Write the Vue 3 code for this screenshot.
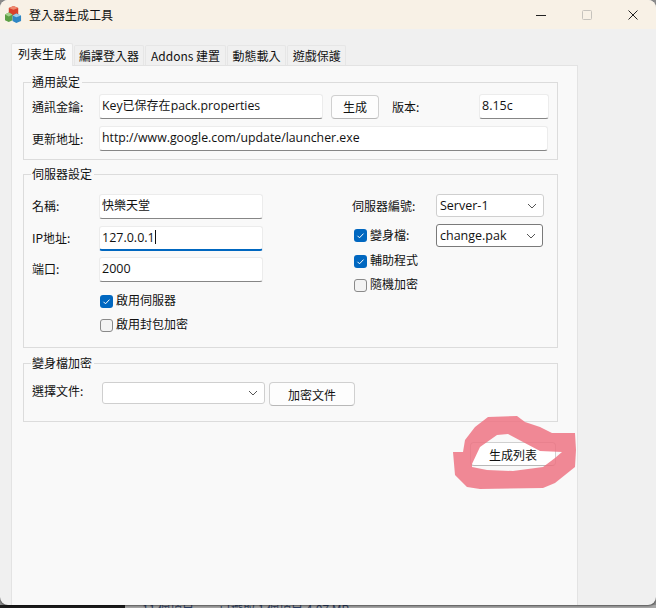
<script setup>
const tabs = ['編譯登入器', 'Addons 建置', '動態載入', '遊戲保護']
</script>

<template>
  <div class="screen">
    <div class="window">
      <div class="titlebar">
        <svg class="app-icon" width="17" height="17" viewBox="0 0 18 18">
          <polygon points="4,2 9,0 14,2 14,9 9,11 4,9" fill="#d8402c" />
          <polygon points="4,2 9,4 14,2 9,0" fill="#ee8a70" />
          <polygon points="0,9 4,7 8,9 8,15 4,17 0,15" fill="#5c9f44" />
          <polygon points="0,9 4,11 8,9 4,7" fill="#a4d08c" />
          <polygon points="8,10 12,8 17,10 17,16 12,18 8,16" fill="#2f86c4" />
          <polygon points="8,10 12,12 17,10 12,8" fill="#9ccbe8" />
        </svg>
        <span class="title">登入器生成工具</span>
        <div class="controls">
          <div class="ctl">
            <svg width="12" height="12" viewBox="0 0 12 12"><path d="M1 6.5h10" stroke="#222" stroke-width="1" /></svg>
          </div>
          <div class="ctl">
            <svg width="12" height="12" viewBox="0 0 12 12"><rect x="1.5" y="1.5" width="9" height="9" rx="1" fill="none" stroke="#c6c3bd" /></svg>
          </div>
          <div class="ctl">
            <svg width="12" height="12" viewBox="0 0 12 12"><path d="M1.5 1.5l9 9M10.5 1.5l-9 9" stroke="#222" stroke-width="1" /></svg>
          </div>
        </div>
      </div>

      <div class="body">
        <div class="tabs">
          <div class="tab active">列表生成</div>
          <div class="tab" v-for="tab in tabs" :key="tab">{{ tab }}</div>
        </div>

        <div class="panel">
          <fieldset class="group g1">
            <legend>通用設定</legend>
            <div class="row">
              <label class="lbl">通訊金鑰:</label>
              <div class="field key"><span class="latin">Key</span>已保存在<span class="latin">pack.properties</span></div>
              <button class="btn gen">生成</button>
              <label class="ver">版本:</label>
              <div class="field version"><span class="num">8.15c</span></div>
            </div>
            <div class="row">
              <label class="lbl">更新地址:</label>
              <div class="field url"><span class="latin">http://www.google.com/update/launcher.exe</span></div>
            </div>
          </fieldset>

          <fieldset class="group g2">
            <legend>伺服器設定</legend>
            <div class="cols">
              <div class="left">
                <div class="row">
                  <label class="lbl">名稱:</label>
                  <div class="field srv">快樂天堂</div>
                </div>
                <div class="row">
                  <label class="lbl">IP地址:</label>
                  <div class="field srv focused"><span class="num">127.0.0.1</span><i class="caret"></i></div>
                </div>
                <div class="row">
                  <label class="lbl">端口:</label>
                  <div class="field srv"><span class="num">2000</span></div>
                </div>
                <div class="checks">
                  <label class="check"><span class="box on"><svg width="13" height="13" viewBox="0 0 13 13"><path d="M3.5 6.8l2 2 4-4.2" fill="none" stroke="#fff" stroke-width="1" /></svg></span>啟用伺服器</label>
                  <label class="check"><span class="box"></span>啟用封包加密</label>
                </div>
              </div>
              <div class="right">
                <div class="row">
                  <label class="lbl-r">伺服器編號:</label>
                  <div class="combo c1"><span class="num">Server-1</span>
                    <svg width="10" height="6" viewBox="0 0 10 6"><path d="M1 1l4 4 4-4" fill="none" stroke="#555" /></svg>
                  </div>
                </div>
                <div class="row pak">
                  <label class="check lbl-r"><span class="box on"><svg width="13" height="13" viewBox="0 0 13 13"><path d="M3.5 6.8l2 2 4-4.2" fill="none" stroke="#fff" stroke-width="1" /></svg></span>變身檔:</label>
                  <div class="combo c2"><span class="num">change.pak</span>
                    <svg width="10" height="6" viewBox="0 0 10 6"><path d="M1 1l4 4 4-4" fill="none" stroke="#555" /></svg>
                  </div>
                </div>
                <label class="check"><span class="box on"><svg width="13" height="13" viewBox="0 0 13 13"><path d="M3.5 6.8l2 2 4-4.2" fill="none" stroke="#fff" stroke-width="1" /></svg></span>輔助程式</label>
                <label class="check"><span class="box"></span>隨機加密</label>
              </div>
            </div>
          </fieldset>

          <fieldset class="group g3">
            <legend>變身檔加密</legend>
            <div class="row top">
              <label class="lbl l3">選擇文件:</label>
              <div class="combo c3">
                <svg width="10" height="6" viewBox="0 0 10 6"><path d="M1 1l4 4 4-4" fill="none" stroke="#555" /></svg>
              </div>
              <button class="btn enc">加密文件</button>
            </div>
          </fieldset>

          <div class="actions">
            <button class="btn make">生成列表</button>
          </div>
        </div>
      </div>
    </div>

    <div class="taskstrip">
      <div class="dark"></div>
      <div class="status"><span>11 個項目</span><span class="sel">已選取 1 個項目 4.07 MB</span></div>
    </div>

    <!-- marca rosa hecha a mano encima del boton -->
    <svg class="scribble" width="656" height="608" viewBox="0 0 656 608">
      <path
        fill="#ee6f7f"
        fill-opacity="0.82"
        fill-rule="evenodd"
        d="M453 452 L463 452 L465 440 L475 427 L488 417 L517 416 L525 422 L540 427 L552 433 L575 433 L576 450 L575 467 L555 483 L543 488 L480 489 L467 487 L455 475 Z
           M472 464 L480 447 L497 435 L508 434 L523 442 L540 451 L562 452 L555 458 L543 467 L513 471 L487 470 L472 467 Z"
      />
    </svg>
  </div>
</template>

<style scoped>
.screen {
  position: relative;
  width: 656px;
  height: 608px;
  overflow: hidden;
  background: #8c8c8c;
  font-family: "Noto Sans CJK TC", "Noto Sans", sans-serif;
  font-size: 12px;
  color: #111;
}
.window {
  height: 605px;
  display: flex;
  flex-direction: column;
  border-radius: 8px;
  overflow: hidden;
  background: #f0f0f0;
  box-shadow: 0 1px 2px rgba(0, 0, 0, 0.5);
  position: relative;
  z-index: 1;
}
.titlebar {
  height: 29px;
  flex: none;
  display: flex;
  align-items: center;
  background: #f8f1e6;
  padding-left: 5px;
}
.app-icon {
  margin-right: 7px;
}
.title {
  font-size: 12px;
}
.controls {
  margin-left: auto;
  display: flex;
}
.ctl {
  width: 46px;
  height: 29px;
  display: flex;
  align-items: center;
  justify-content: center;
}

.body {
  flex: 1;
  display: flex;
  flex-direction: column;
  padding: 14px 78px 0 11px;
  min-height: 0;
}
.tabs {
  display: flex;
  align-items: flex-end;
  height: 22px;
  gap: 1px;
  position: relative;
  z-index: 1;
}
.tab {
  height: 20px;
  line-height: 19px;
  padding: 0 5px;
  border: 1px solid #e6e6e6;
  border-bottom: none;
  background: #f0f0f0;
  box-sizing: border-box;
  border-radius: 2px 2px 0 0;
}
.tab:nth-child(2) {
  padding: 0 4px;
}
.tab:nth-child(4),
.tab:nth-child(5) {
  padding: 0 4.5px;
}
.tab.active {
  height: 23px;
  margin-bottom: -1px;
  padding: 0 6px;
  line-height: 20px;
  background: #f9f9f9;
}
.panel {
  flex: 1;
  background: #f9f9f9;
  border: 1px solid #e3e3e3;
  border-bottom: none;
  padding: 8px 19px 0 11px;
  display: flex;
  flex-direction: column;
}

.group {
  margin: 0;
  min-width: 0;
  border: 1px solid #dcdcdc;
  padding: 4px 8px 8px 8px;
}
.group legend {
  padding: 0 2px 0 1px;
  margin-left: -1px;
  line-height: 16px;
  height: 16px;
}
.g1 .row + .row {
  margin-top: 7px;
}
.g2 {
  margin-top: 6px;
  height: 182px;
  padding-top: 12px;
  box-sizing: border-box;
}
.g2 .lbl {
  padding-bottom: 2px;
}
.g3 {
  margin-top: 7px;
  padding: 11px 8px 15px 8px;
}

.row {
  display: flex;
  align-items: center;
}
.row.top {
  align-items: flex-start;
}
.lbl {
  width: 67px;
  flex: none;
}
.l3 {
  width: 70px;
}
.ver {
  margin-left: 13px;
  width: 87px;
  flex: none;
}
.field {
  height: 25px;
  box-sizing: border-box;
  background: #fff;
  border: 1px solid #ececec;
  border-bottom-color: #868686;
  border-radius: 3px;
  padding: 1px 0 0 2px;
  line-height: 18px;
  white-space: nowrap;
}
.latin {
  font-family: "Open Sans", "Noto Sans", sans-serif;
  font-size: 12.3px;
}
.num {
  font-family: "Open Sans", "Noto Sans", sans-serif;
  font-size: 12.5px;
}
.key {
  width: 224px;
}
.version {
  width: 70px;
}
.url {
  width: 449px;
}
.srv {
  width: 164px;
}
.focused {
  border-bottom: 2px solid #0067c0;
}
.caret {
  display: inline-block;
  width: 1px;
  height: 14px;
  background: #111;
  vertical-align: -2px;
}
.btn {
  font: inherit;
  color: inherit;
  background: #fdfdfd;
  border: 1px solid #d0d0d0;
  border-bottom-color: #b8b8b8;
  border-radius: 4px;
  padding: 0;
}
.gen {
  width: 48px;
  height: 24px;
  margin-left: 8px;
}
.enc {
  width: 86px;
  height: 24px;
  margin-left: 4px;
}
.make {
  width: 86px;
  height: 24px;
  background: #fff;
}
.actions {
  display: flex;
  justify-content: flex-end;
  margin-top: 20px;
  margin-right: 2px;
}

.cols {
  display: flex;
}
.left {
  width: 320px;
  flex: none;
  display: flex;
  flex-direction: column;
  gap: 6.5px;
}
.checks {
  margin: 3.5px 0 0 68px;
  display: flex;
  flex-direction: column;
  gap: 6px;
}
.check {
  display: flex;
  align-items: flex-start;
  height: 18px;
  line-height: 16px;
  white-space: nowrap;
}
.box {
  width: 13px;
  height: 13px;
  box-sizing: border-box;
  border: 1px solid #8a8a8a;
  background: #f3f3f3;
  border-radius: 3px;
  margin: 2.5px 3px 0 0;
  display: flex;
}
.box.on {
  border: none;
  background: #0067c0;
}
.right {
  display: flex;
  flex-direction: column;
  gap: 6px;
}
.right > .check {
  margin-left: 2px;
}
.pak {
  margin: 1px 0 -1px;
}
.lbl-r {
  width: 84px;
  flex: none;
}
.right .row .check {
  margin-left: 2px;
  width: 82px;
}
.combo {
  height: 23px;
  box-sizing: border-box;
  background: #fff;
  border: 1px solid #cfcfcf;
  border-radius: 3px;
  display: flex;
  align-items: center;
  justify-content: space-between;
  padding: 0 6px 0 3px;
}
.combo svg {
  margin-left: auto;
}
.c1 {
  width: 108px;
}
.c2 {
  width: 107px;
  border-color: #7a7a7a;
}
.c3 {
  width: 163px;
  height: 22px;
}

.taskstrip {
  height: 3px;
  display: flex;
  overflow: hidden;
  font-size: 12px;
}
.dark {
  width: 125px;
  background: #1d1d1d;
  flex: none;
}
.status {
  flex: 1;
  margin-top: -4px;
  padding-left: 17px;
  line-height: 16px;
  background: #a8a8a8;
  color: #2d3f63;
  white-space: nowrap;
}
.sel {
  margin-left: 25px;
}
.scribble {
  position: absolute;
  left: 0;
  top: 0;
  z-index: 2;
  pointer-events: none;
}
</style>
